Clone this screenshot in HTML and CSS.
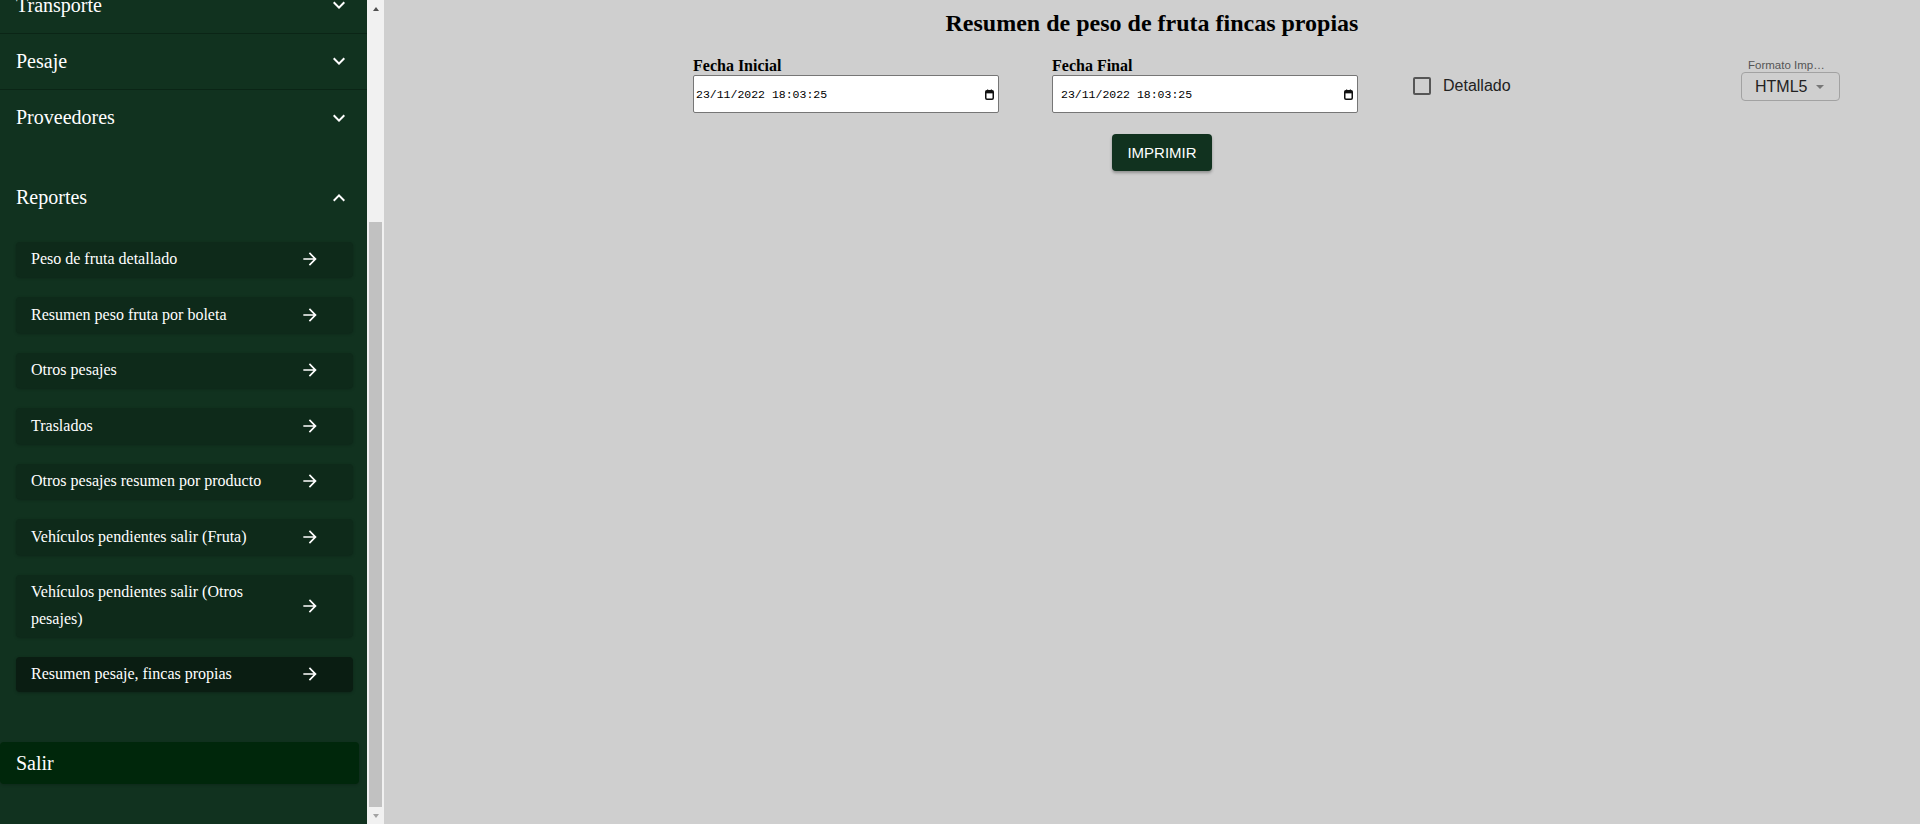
FILE: index.html
```html
<!DOCTYPE html>
<html lang="es">
<head>
<meta charset="utf-8">
<title>Resumen de peso de fruta fincas propias</title>
<link rel="stylesheet" href="styles.css">
</head>
<body>
<div class="app">
  <div class="sidebar-wrap">
    <aside class="sidebar">
      <div class="sidebar-inner">
        <div class="brand">
          <svg width="64" height="64" viewBox="0 0 64 64"><circle cx="32" cy="32" r="28" fill="none" stroke="#2f6b45" stroke-width="4"/><path d="M20 38c6-16 18-20 26-18-2 10-10 20-26 18z" fill="#2f6b45"/></svg>
        </div>
        <div class="menu-row">
          <span>Inicio</span>
        </div>
        <div class="menu-row">
          <span>Administración</span>
          <svg class="chev" viewBox="0 0 24 24"><path d="M16.59 8.59L12 13.17 7.41 8.59 6 10l6 6 6-6z"/></svg>
        </div>
        <div class="menu-row">
          <span>Transporte</span>
          <svg class="chev" viewBox="0 0 24 24"><path d="M16.59 8.59L12 13.17 7.41 8.59 6 10l6 6 6-6z"/></svg>
        </div>
        <div class="menu-row">
          <span>Pesaje</span>
          <svg class="chev" viewBox="0 0 24 24"><path d="M16.59 8.59L12 13.17 7.41 8.59 6 10l6 6 6-6z"/></svg>
        </div>
        <div class="menu-row menu-row--plain">
          <span>Proveedores</span>
          <svg class="chev" viewBox="0 0 24 24"><path d="M16.59 8.59L12 13.17 7.41 8.59 6 10l6 6 6-6z"/></svg>
        </div>
        <div class="menu-group">
          <div class="menu-row menu-row--plain">
            <span>Reportes</span>
            <svg class="chev" viewBox="0 0 24 24"><path d="M12 8l-6 6 1.41 1.41L12 10.83l4.59 4.58L18 14z"/></svg>
          </div>
          <ul class="submenu">
            <li class="subitem"><span class="subitem-text">Peso de fruta detallado</span><svg class="subitem-icon" viewBox="0 0 24 24"><path d="M12 4l-1.41 1.41L16.17 11H4v2h12.17l-5.58 5.59L12 20l8-8z"/></svg></li>
            <li class="subitem"><span class="subitem-text">Resumen peso fruta por boleta</span><svg class="subitem-icon" viewBox="0 0 24 24"><path d="M12 4l-1.41 1.41L16.17 11H4v2h12.17l-5.58 5.59L12 20l8-8z"/></svg></li>
            <li class="subitem"><span class="subitem-text">Otros pesajes</span><svg class="subitem-icon" viewBox="0 0 24 24"><path d="M12 4l-1.41 1.41L16.17 11H4v2h12.17l-5.58 5.59L12 20l8-8z"/></svg></li>
            <li class="subitem"><span class="subitem-text">Traslados</span><svg class="subitem-icon" viewBox="0 0 24 24"><path d="M12 4l-1.41 1.41L16.17 11H4v2h12.17l-5.58 5.59L12 20l8-8z"/></svg></li>
            <li class="subitem"><span class="subitem-text">Otros pesajes resumen por producto</span><svg class="subitem-icon" viewBox="0 0 24 24"><path d="M12 4l-1.41 1.41L16.17 11H4v2h12.17l-5.58 5.59L12 20l8-8z"/></svg></li>
            <li class="subitem"><span class="subitem-text">Vehículos pendientes salir (Fruta)</span><svg class="subitem-icon" viewBox="0 0 24 24"><path d="M12 4l-1.41 1.41L16.17 11H4v2h12.17l-5.58 5.59L12 20l8-8z"/></svg></li>
            <li class="subitem"><span class="subitem-text">Vehículos pendientes salir (Otros pesajes)</span><svg class="subitem-icon" viewBox="0 0 24 24"><path d="M12 4l-1.41 1.41L16.17 11H4v2h12.17l-5.58 5.59L12 20l8-8z"/></svg></li>
            <li class="subitem subitem--active"><span class="subitem-text">Resumen pesaje, fincas propias</span><svg class="subitem-icon" viewBox="0 0 24 24"><path d="M12 4l-1.41 1.41L16.17 11H4v2h12.17l-5.58 5.59L12 20l8-8z"/></svg></li>
          </ul>
        </div>
        <div class="logout">Salir</div>
      </div>
    </aside>
    <div class="scrollbar" aria-hidden="true">
      <span class="sb-btn sb-btn--up"></span>
      <span class="sb-track"><span class="sb-thumb"></span></span>
      <span class="sb-btn sb-btn--down"></span>
    </div>
  </div>

  <main class="content">
    <h1 class="title">Resumen de peso de fruta fincas propias</h1>
    <div class="form-row">
      <div class="field">
        <label class="field-label">Fecha Inicial</label>
        <div class="date-input">
          <span class="date-value">23/11/2022 18:03:25</span>
          <svg class="cal" viewBox="0 0 9 11"><rect x="0.75" y="1.75" width="7.5" height="8.5" rx="1.2" fill="none" stroke="#111" stroke-width="1.5"/><rect x="0.75" y="1.75" width="7.5" height="2.6" fill="#111"/><rect x="2" y="0.5" width="1.2" height="2" fill="#111"/><rect x="5.8" y="0.5" width="1.2" height="2" fill="#111"/></svg>
        </div>
      </div>
      <div class="field">
        <label class="field-label">Fecha Final</label>
        <div class="date-input date-input--padded">
          <span class="date-value">23/11/2022 18:03:25</span>
          <svg class="cal" viewBox="0 0 9 11"><rect x="0.75" y="1.75" width="7.5" height="8.5" rx="1.2" fill="none" stroke="#111" stroke-width="1.5"/><rect x="0.75" y="1.75" width="7.5" height="2.6" fill="#111"/><rect x="2" y="0.5" width="1.2" height="2" fill="#111"/><rect x="5.8" y="0.5" width="1.2" height="2" fill="#111"/></svg>
        </div>
      </div>
      <div class="check-field">
        <span class="check-box"></span>
        <span class="check-label">Detallado</span>
      </div>
      <div class="select-field">
        <div class="select-label">Formato Impresión</div>
        <div class="select-box">
          <span class="select-value">HTML5</span>
          <span class="select-caret"></span>
        </div>
      </div>
    </div>
    <div class="actions">
      <button class="btn-print" type="button">IMPRIMIR</button>
    </div>
  </main>
</div>
</body>
</html>
```
FILE: styles.css
```css
* { box-sizing: border-box; }

html, body {
  margin: 0;
  height: 100%;
}

body {
  font-family: "Liberation Serif", "Times New Roman", serif;
  overflow: hidden;
}

.app {
  display: flex;
  height: 100vh;
}

/* ---------- Sidebar ---------- */
.sidebar-wrap {
  flex: 0 0 384px;
  display: flex;
  height: 100%;
}

.sidebar {
  flex: 0 0 367px;
  width: 367px;
  background: #11321f;
  color: #fff;
  overflow-y: scroll;
  scrollbar-width: none;
  display: flex;
  flex-direction: column-reverse;
}

.sidebar::-webkit-scrollbar {
  display: none;
}

.sidebar-inner {
  flex: none;
  padding-bottom: 40px;
}

.brand {
  height: 153px;
  display: flex;
  align-items: center;
  justify-content: center;
}

.menu-row {
  height: 56px;
  display: flex;
  align-items: center;
  justify-content: space-between;
  padding: 0 16px;
  font-size: 20px;
  border-bottom: 1px solid #0b2516;
}

.menu-row--plain {
  border-bottom: none;
}

.chev {
  width: 24px;
  height: 24px;
  fill: #fff;
  flex: none;
}

.menu-group {
  margin-top: 24px;
}

.submenu {
  list-style: none;
  margin: 0;
  padding: 16px 14px 0 16px;
}

.subitem {
  display: flex;
  align-items: center;
  padding: 4.5px 0 4.5px 15px;
  font-size: 16px;
  line-height: 26.5px;
  background: #0e2a1a;
  border-radius: 4px;
  margin-bottom: 20px;
  box-shadow: 0 1px 3px rgba(0, 0, 0, 0.25);
}

.subitem--active {
  background: #0a1d12;
}

.subitem-text {
  flex: 1;
  padding-right: 20px;
}

.subitem-icon {
  flex: none;
  width: 20px;
  height: 20px;
  margin-right: 33px;
  fill: #fff;
}

.logout {
  margin: 50px 8px 0 0;
  height: 42px;
  display: flex;
  align-items: center;
  padding-left: 16px;
  font-size: 20px;
  background: #00270b;
  border-radius: 4px;
  box-shadow: 0 1px 3px rgba(0, 0, 0, 0.2);
}

/* fake classic scrollbar (headless hides native ones) */
.scrollbar {
  flex: 0 0 17px;
  background: #f1f1f1;
  display: flex;
  flex-direction: column;
}

.sb-btn {
  flex: 0 0 17px;
  display: flex;
  align-items: center;
  justify-content: center;
}

.sb-btn::before {
  content: "";
  width: 0;
  height: 0;
  border-left: 3.5px solid transparent;
  border-right: 3.5px solid transparent;
}

.sb-btn--up::before {
  border-bottom: 4px solid #505050;
}

.sb-btn--down::before {
  border-top: 4px solid #a3a3a3;
}

.sb-track {
  flex: 1;
  display: flex;
  flex-direction: column;
  justify-content: flex-end;
  padding: 0 2px;
}

.sb-thumb {
  height: 585px;
  background: #c1c1c1;
}

/* ---------- Main content ---------- */
.content {
  flex: 1;
  background: #cfcfcf;
  padding-top: 9px;
  color: #000;
}

.title {
  margin: 0;
  font-size: 24px;
  line-height: 28px;
  font-weight: bold;
  text-align: center;
}

.form-row {
  display: grid;
  grid-template-columns: 359px 361px 328px 99px;
  align-items: start;
  margin: 19px 0 0 309px;
}

.field-label {
  display: block;
  font-size: 16px;
  line-height: 19px;
  font-weight: bold;
}

.date-input {
  width: 306px;
  height: 38px;
  background: #fff;
  border: 1px solid #767676;
  border-radius: 2px;
  display: flex;
  align-items: center;
  justify-content: space-between;
  padding: 0 4px 0 2px;
  font-family: "Liberation Mono", "DejaVu Sans Mono", monospace;
  font-size: 11.5px;
  color: #000;
}

.date-input--padded {
  padding-left: 8px;
}

.cal {
  width: 9px;
  height: 11px;
  flex: none;
}

.check-field {
  margin-top: 21px;
  display: flex;
  align-items: center;
  gap: 12px;
  font-family: "Liberation Sans", Arial, sans-serif;
}

.check-box {
  width: 18px;
  height: 18px;
  border: 2px solid #565656;
  border-radius: 2px;
  flex: none;
}

.check-label {
  font-size: 16px;
  color: #222;
  line-height: 18px;
}

.select-field {
  margin-top: 3px;
  font-family: "Liberation Sans", Arial, sans-serif;
}

.select-label {
  font-size: 11.5px;
  line-height: 13px;
  color: #555;
  padding-left: 7px;
  width: 85px;
  white-space: nowrap;
  overflow: hidden;
  text-overflow: ellipsis;
}

.select-box {
  height: 29px;
  border: 1px solid #a2a2a2;
  border-radius: 4px;
  display: flex;
  align-items: center;
  padding: 0 0 0 13px;
}

.select-value {
  font-size: 16px;
  color: #222;
}

.select-caret {
  margin-left: 9px;
  width: 0;
  height: 0;
  border-left: 4px solid transparent;
  border-right: 4px solid transparent;
  border-top: 4px solid #777;
}

.actions {
  margin: 21px 0 0 728px;
}

.btn-print {
  width: 100px;
  height: 37px;
  border: none;
  border-radius: 4px;
  background: #11321f;
  color: #fff;
  font-family: "Liberation Sans", Arial, sans-serif;
  font-size: 15px;
  box-shadow: 0 2px 3px rgba(0, 0, 0, 0.3);
  cursor: pointer;
}
```
